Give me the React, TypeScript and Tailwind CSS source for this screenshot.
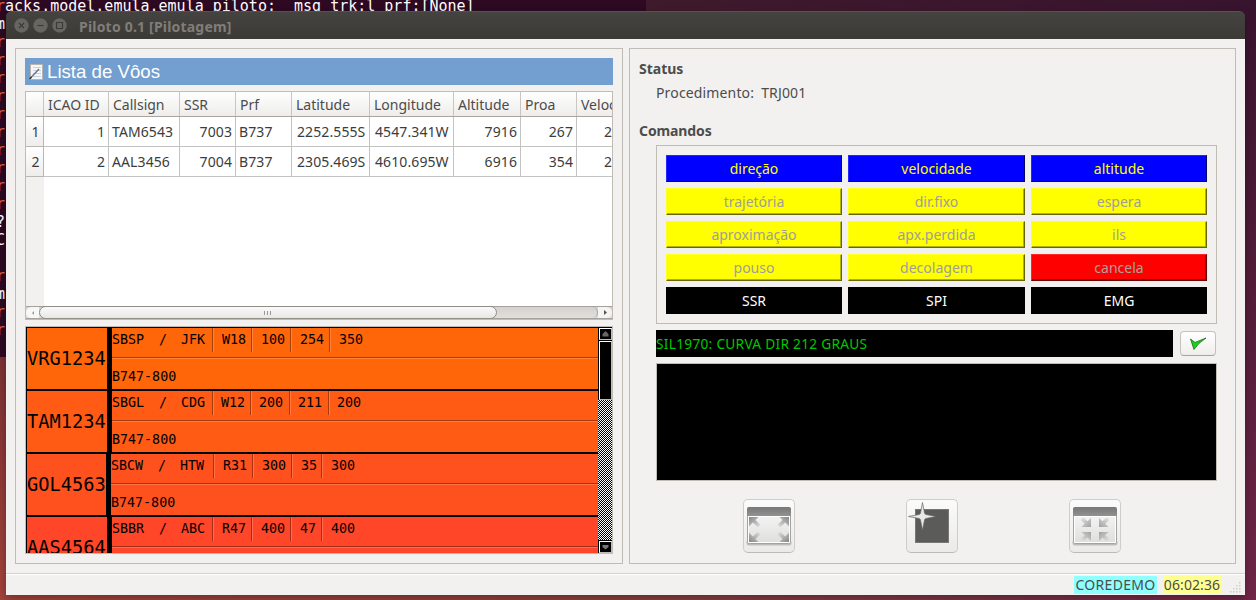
import React from 'react';

const cols = ['w-[65px]', 'w-[71px]', 'w-[56px]', 'w-[56px]', 'w-[78px]', 'w-[84px]', 'w-[67px]', 'w-[56px]', 'w-[60px]'];
const heads = ['ICAO ID', 'Callsign', 'SSR', 'Prf', 'Latitude', 'Longitude', 'Altitude', 'Proa', 'Velocidade'];
const rightAligned = [true, false, true, false, false, false, true, true, false];
const flights = [
  ['1', 'TAM6543', '7003', 'B737', '2252.555S', '4547.341W', '7916', '267', '220'],
  ['2', 'AAL3456', '7004', 'B737', '2305.469S', '4610.695W', '6916', '354', '220'],
];

const strips = [
  { id: 'VRG1234', from: 'SBSP', to: 'JFK', v: ['W18', '100', '254', '350'], bg: 'bg-[#ff660a]', left: 'w-[80px]', pad: 'pl-[9px]', w: ['w-[100px]', 'w-[39px]', 'w-[39px]', 'w-[39px]'] },
  { id: 'TAM1234', from: 'SBGL', to: 'CDG', v: ['W12', '200', '211', '200'], bg: 'bg-[#ff5b14]', left: 'w-[80px]', pad: 'pl-[8px]', w: ['w-[100px]', 'w-[38px]', 'w-[39px]', 'w-[39px]'] },
  { id: 'GOL4563', from: 'SBCW', to: 'HTW', v: ['R31', '300', '35', '300'], bg: 'bg-[#ff511e]', left: 'w-[79px]', pad: 'pl-[9px]', w: ['w-[102px]', 'w-[39px]', 'w-[39px]', 'w-[30px]'] },
  { id: 'AAS4564', from: 'SBBR', to: 'ABC', v: ['R47', '400', '47', '400'], bg: 'bg-[#ff4628]', left: 'w-[80px]', pad: 'pl-[9px]', w: ['w-[100px]', 'w-[39px]', 'w-[39px]', 'w-[31px]'] },
];

const BLUE = 'bg-[#0000ff] text-[#ffff00] border-t-[#2626ff] border-l-[#2626ff] border-r-[#000066] border-b-[#000066]';
const YELLOW = 'bg-[#ffff00] text-[#a09e9a] border-t-[#ffff26] border-l-[#ffff26] border-r-[#666600] border-b-[#666600] shadow-[inset_-1px_-1px_0_#b2b200]';
const RED = 'bg-[#ff0000] text-[#b0a09c] border-t-[#ff2626] border-l-[#ff2626] border-r-[#660000] border-b-[#660000] shadow-[inset_-1px_-1px_0_#b20000]';
const BLACK = 'bg-black text-white border-black';
const commands: [string, string][] = [
  ['direção', BLUE], ['velocidade', BLUE], ['altitude', BLUE],
  ['trajetória', YELLOW], ['dir.fixo', YELLOW], ['espera', YELLOW],
  ['aproximação', YELLOW], ['apx.perdida', YELLOW], ['ils', YELLOW],
  ['pouso', YELLOW], ['decolagem', YELLOW], ['cancela', RED],
  ['SSR', BLACK], ['SPI', BLACK], ['EMG', BLACK],
];

const edge: [string, string][] = [
  ['m', 'text-white'], ['r', 'text-[#e0683a]'], ['r', 'text-[#e0683a]'], ['r', 'text-[#e0683a]'], ['r', 'text-[#e0683a]'],
  ['r', 'text-[#e0683a]'], ['r', 'text-[#e0683a]'], ['r', 'text-[#e0683a]'], ['r', 'text-[#e0683a]'], ['r', 'text-[#e0683a]'],
  ['r', 'text-[#e0683a]'], ['?', 'text-white'], ['C', 'text-white'], ['', ''], ['r', 'text-[#e0683a]'], ['m', 'text-white'],
  ['r', 'text-[#e0683a]'], ['r', 'text-[#e0683a]'],
];

function Terminal() {
  return (
    <div className="h-[357px] w-[646px] overflow-hidden bg-[#2d0922] font-['DejaVu_Sans_Mono',monospace] text-[15px] leading-[18px] text-white">
      <div className="-ml-1 -mt-[3px]">
        <div className="whitespace-pre"><span className="text-[#e0683a]">r</span>acks.model.emula.emula_piloto:  msg_trk:l_prf:[None]</div>
        {edge.map(([c, color], i) => <div key={i} className={`h-[18px] ${color}`}>{c}</div>)}
      </div>
    </div>
  );
}

function TitleBar() {
  const shapes = ['M5 5l5 5M10 5l-5 5', 'M4.5 7.5h6', 'M4.5 4.5h6v6h-6z'];
  return (
    <div className="flex h-7 items-center rounded-t-[6px] border-t border-[#55544f] bg-linear-to-b from-[#44433f] to-[#3b3a36] pl-2">
      <div className="flex gap-1">
        {shapes.map((d) => (
          <svg key={d} width="15" height="15" viewBox="0 0 15 15">
            <circle cx="7.5" cy="7.5" r="7.2" fill="#66655f" />
            <path d={d} stroke="#3b3a36" strokeWidth="1.1" fill="none" />
          </svg>
        ))}
      </div>
      <span className="ml-3 mt-px text-[14px] font-bold tracking-[0.2px] text-[#807d78]">Piloto 0.1 [Pilotagem]</span>
    </div>
  );
}

function FlightTable() {
  return (
    <div className="mt-1.5 flex h-[229px] flex-col overflow-hidden border border-[#bfbcb5] bg-white text-[#3c3c3c]">
      <div className="flex h-[25px] shrink-0 border-b border-[#a9a69f] bg-linear-to-b from-white to-[#eeedeb] text-[#4c4c4c]">
        <div className="w-[18px] shrink-0 border-r border-[#c8c6c2]" />
        {heads.map((h, i) => (
          <div key={h} className={`${cols[i]} flex shrink-0 items-center border-r border-[#c8c6c2] pl-1`}>{h}</div>
        ))}
      </div>
      {flights.map((row, r) => (
        <div key={r} className="flex h-[30px] shrink-0 tracking-[0.1px]">
          <div className="flex w-[18px] shrink-0 items-center justify-center border-b border-r border-[#b9b7b2] bg-linear-to-b from-white to-[#eeedeb] pl-0.5">{r + 1}</div>
          {row.map((v, i) => (
            <div key={i} className={`${cols[i]} flex shrink-0 items-center border-b border-r border-[#c3c3c3] ${rightAligned[i] ? 'justify-end pr-[3px]' : i === 8 ? 'pl-[27px]' : i === 4 || i === 5 ? 'pl-[5px]' : 'pl-[3px]'}`}>{v}</div>
          ))}
        </div>
      ))}
      <div className="w-[18px] flex-1 bg-[#f2f1f0]" />
      <div className="flex h-[13px] shrink-0 border-y border-[#a5a29b] bg-linear-to-b from-[#d3d2cf] to-[#e0dfdc]">
        <div className="flex w-[13px] items-center justify-center rounded-l-full bg-[#f7f7f6]">
          <svg width="4" height="6"><path d="M3 1L1 3l2 2z" fill="#999" /></svg>
        </div>
        <div className="-my-px flex w-[458px] items-center justify-center gap-[2px] rounded-full border border-[#918e87] bg-linear-to-b from-[#fafafa] to-[#e8e7e5] pr-0.5">
          <i className="h-1 w-px bg-[#999]" /><i className="h-1 w-px bg-[#999]" /><i className="h-1 w-px bg-[#999]" />
        </div>
        <div className="w-[101px] rounded-r-full border-r border-[#a5a29b]" />
        <div className="flex flex-1 items-center justify-center rounded-r-full bg-[#f4f4f2]">
          <svg width="5" height="7"><path d="M1 1l3 2.5L1 6z" fill="#555" /></svg>
        </div>
      </div>
    </div>
  );
}

function StripList() {
  return (
    <div className="mt-1.5 flex h-[228px] overflow-hidden border border-[#bfbcb5] bg-black font-['DejaVu_Sans_Mono',monospace] text-[13.33px] text-black">
      <div className="w-[572px] shrink-0 pl-px pt-px">
        {strips.map((s) => (
          <div key={s.id} className="mb-[2px] flex h-[61px] gap-[5px]">
            <div className={`${s.left} ${s.bg} flex shrink-0 items-center whitespace-nowrap text-[18.67px]`}>{s.id}</div>
            <div className={`${s.bg} min-w-0 flex-1`}>
              <div className="flex h-[29px]">
                <div className={`${s.w[0]} flex h-6 shrink-0 items-center`}>
                  <span className="w-[47px]">{s.from}</span><span className="w-[22px]">/</span><span>{s.to}</span>
                </div>
                {s.v.map((v, i) => (
                  <div key={i} className={`${s.w[i + 1] ?? 'w-[60px]'} ${s.pad} flex h-6 shrink-0 items-center border-l border-black/35 shadow-[inset_1px_0_0_rgba(255,255,255,0.2)]`}>{v}</div>
                ))}
              </div>
              <div className="h-px bg-black/35" />
              <div className="flex h-[31px] items-center border-t border-white/20 pt-[6px]">B747-800</div>
            </div>
          </div>
        ))}
      </div>
      <div className="flex w-[14px] flex-col pt-px">
        <div className="ml-px flex h-[12px] shrink-0 items-center justify-center border border-b-[#bfbcb5] border-l-white border-r-[#bfbcb5] border-t-white">
          <svg width="7" height="6"><path d="M3.5 0L6.5 3v2.5h-6V3z" fill="#666" /></svg>
        </div>
        <div className="ml-px mt-px h-[59px] shrink-0 border border-b-[#bfbcb5] border-l-white border-r-[#bfbcb5] border-t-white" />
        <div className="flex-1 bg-[repeating-conic-gradient(#000_0_25%,#fff_0_50%)] bg-size-[2px_2px]" />
        <div className="ml-px mt-px flex h-[12px] shrink-0 items-center justify-center border border-b-[#bfbcb5] border-l-white border-r-[#bfbcb5] border-t-white">
          <svg width="7" height="6"><path d="M3.5 5.5L6.5 3V1h-6v2z" fill="#777" /></svg>
        </div>
      </div>
    </div>
  );
}

function WindowIcon({ inward }: { inward: boolean }) {
  const arrow = inward ? 'M19 23H9.500l3.200-3.200L8.500 16l2.700-2.500 4.300 3.700L19 14z' : 'M3 13h9.500l-3 3 5 4.700-2.700 2.600-5-4.800L3 22.500z';
  const flips = ['', 'translate(46 0) scale(-1 1)', 'translate(0 51) scale(1 -1)', 'translate(46 51) scale(-1 -1)'];
  return (
    <svg width="46" height="44" viewBox="0 0 46 44">
      <defs>
        <linearGradient id="bar" x2="0" y2="1"><stop stopColor="#777" /><stop offset="1" stopColor="#929292" /></linearGradient>
        <linearGradient id="pane" x2="0" y2="1"><stop stopColor="#fafafa" /><stop offset="1" stopColor="#dededc" /></linearGradient>
        <linearGradient id="arrOut" x2="1" y2="1"><stop stopColor="#858585" /><stop offset="1" stopColor="#e4e4e4" /></linearGradient>
        <linearGradient id="arrIn" x2="1" y2="1"><stop stopColor="#e6e6e6" /><stop offset="1" stopColor="#a0a0a0" /></linearGradient>
      </defs>
      <rect x="0.5" y="36" width="45" height="5.500" rx="2.500" fill="#bdbcba" />
      <rect x="1.500" y="3.500" width="43" height="36" rx="2" fill="url(#pane)" stroke="#a2a2a0" />
      <path d="M1 12V5q0-2 2-2h40q2 0 2 2v7z" fill="url(#bar)" />
      <path d="M2.500 12.500v26h41v-26z" fill="none" stroke="#fff" />
      {flips.map((t) => <path key={t} transform={t} d={arrow} fill={inward ? 'url(#arrIn)' : 'url(#arrOut)'} />)}
    </svg>
  );
}

function SparkIcon() {
  return (
    <svg className="overflow-visible" width="46" height="46" viewBox="0 0 46 46">
      <rect x="6.500" y="6.500" width="33" height="33" fill="#5b5b59" stroke="#777775" />
      <path d="M13.500 -0.500l2 10.500q.3 1.200 1.500 1.500l10 2-10 2q-1.200.3-1.500 1.500l-2 10-2-10q-.3-1.200-1.500-1.500L-.5 13.500 10 11.500q1.200-.3 1.500-1.500z" fill="#e9e9e7" stroke="#666" strokeWidth=".7" />
    </svg>
  );
}

function ToolButton({ children }: { children: React.ReactNode }) {
  return (
    <button className="flex h-[54px] w-[52px] items-center justify-center rounded-[5px] border border-[#cfcdca] border-b-[#bdbbb7] bg-linear-to-b from-[#fbfbfb] to-[#ebeae8]">{children}</button>
  );
}

function ControlPanel() {
  return (
    <section className="h-[516px] w-[607px] border border-[#bfbcb5] px-[9px] pt-[9px] text-[#4c4c4c]">
      <h2 className="flex h-5 items-center font-bold">Status</h2>
      <div className="flex h-7 items-center gap-[7px] pl-[17px] tracking-[0.15px]"><span>Procedimento:</span><span>TRJ001</span></div>
      <h2 className="mt-[14px] flex h-5 items-center font-bold tracking-[-0.1px]">Comandos</h2>
      <div className="ml-[17px] mt-[5px] grid h-[179px] w-[561px] grid-cols-[176px_177px_176px] grid-rows-[repeat(5,27px)] gap-1.5 border border-[#bfbcb5] p-[9px]">
        {commands.map(([label, color]) => (
          <button key={label} className={`flex items-center justify-center border ${color}`}>{label}</button>
        ))}
      </div>
      <div className="ml-[17px] mt-1.5 flex h-[27px] items-center gap-[7px]">
        <div className="flex h-[27px] w-[517px] items-center bg-black pt-px text-[13.7px] tracking-[0.28px] text-[#00c800]">SIL1970: CURVA DIR 212 GRAUS</div>
        <button className="flex h-[25px] w-9 items-center justify-center rounded-[4px] border border-[#c4c2be] border-b-[#a5a39e] bg-linear-to-b from-white to-[#efeeec]">
          <svg width="18" height="14" viewBox="0 0 18 14"><path d="M1.500 2l4.500 3.500L17 1Q9 6 5 12.500z" fill="#10d810" stroke="#176b17" strokeWidth=".8" /></svg>
        </button>
      </div>
      <div className="ml-[17px] mt-1.5 h-[118px] w-[561px] border border-[#bfbcb5] bg-black" />
      <div className="ml-[104px] mt-[18px] flex gap-[111px]">
        <ToolButton><WindowIcon inward={false} /></ToolButton>
        <ToolButton><SparkIcon /></ToolButton>
        <ToolButton><WindowIcon inward /></ToolButton>
      </div>
    </section>
  );
}

export default function App() {
  return (
    <div className="relative h-[600px] w-[1256px] overflow-hidden bg-linear-to-r from-[#a3423a] via-[#8a403c] to-[#702646] font-['Noto_Sans',sans-serif] text-[14px]">
      <div className="h-full bg-linear-to-b from-[#250d26]/75 to-transparent">
        <Terminal />
      </div>
      <div className="absolute left-[6px] top-[11px] flex h-[584px] w-[1239px] flex-col rounded-t-[6px] shadow-[0_3px_8px_rgba(0,0,0,0.3)]">
        <TitleBar />
        <main className="flex h-[534px] gap-1.5 bg-[#f2f1ef] pl-[9px] pt-[9px]">
          <section className="h-[516px] w-[608px] border border-[#bfbcb5] p-[9px]">
            <header className="flex h-[27px] items-center bg-[#729fcf] pl-[3px] font-['Liberation_Sans',sans-serif] text-[18.67px] text-white">
              <svg className="mr-[3px]" width="16" height="18" viewBox="0 0 16 18">
                <path d="M2.500 1.500h12v15h-12z" fill="#f4f6fa" stroke="#b9b4ae" />
                <path d="M5 4.500h8M5 7.500h8M5 10.500h8M5 13.500h8" stroke="#c2d2e8" />
                <path d="M2.500 15L11 6" stroke="#777" strokeWidth="1.500" />
                <path d="M1.500 16l2-2" stroke="#333" strokeWidth="1.500" />
              </svg>
              Lista de Vôos
            </header>
            <FlightTable />
            <StripList />
          </section>
          <ControlPanel />
        </main>
        <footer className="flex h-[22px] justify-end gap-1.5 border-t border-[#d5d3cf] bg-[#f2f1ef] pt-[2px] text-[#4c4c4c] shadow-[inset_0_1px_0_#fff]">
          <span className="flex h-[18px] w-[83px] items-center justify-center bg-[#8fffff] pb-0.5 tracking-[0.3px]">COREDEMO</span>
          <span className="flex h-[18px] w-[58px] items-center justify-center bg-[#ffff90] pb-0.5 tracking-[0.1px]">06:02:36</span>
          <svg className="mt-[5px] mr-[2px]" width="16" height="13" viewBox="0 0 16 13" fill="#d0cecb">
            {[[12, 1], [9, 4], [12, 4], [6, 7], [9, 7], [12, 7], [3, 10], [6, 10], [9, 10], [12, 10]].map(([x, y]) => <rect key={`${x}-${y}`} x={x} y={y} width="1.500" height="1.500" />)}
          </svg>
        </footer>
      </div>
    </div>
  );
}
